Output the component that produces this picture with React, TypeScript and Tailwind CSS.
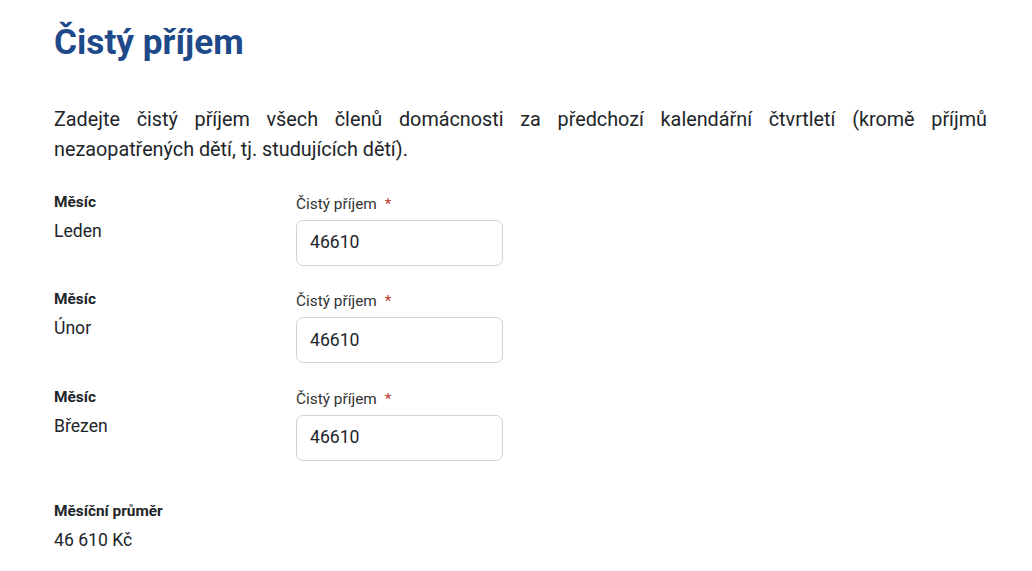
import React from "react";

const months = ["Leden", "Únor", "Březen"];

export default function App() {
  return (
    <div
      className="min-h-[571px] bg-white text-[#212529]"
      style={{ fontFamily: "Roboto, 'Noto Sans', sans-serif" }}
    >
      <div className="w-[933px] ml-[54px] pt-[21px]">
        <h1 className="text-[35.2px] leading-[42px] font-bold text-[#1f4a8a]">Čistý příjem</h1>
        <p className="mt-[41.7px] text-[19.8px] leading-[30px] text-justify text-[#212529]">
          Zadejte čistý příjem všech členů domácnosti za předchozí kalendářní čtvrtletí (kromě příjmů
          nezaopatřených dětí, tj. studujících dětí).
        </p>
        <div className="mt-[26px] flex flex-col gap-[22.5px]">
          {months.map((m) => (
            <div key={m} className="grid grid-cols-[242px_207px]">
              <div>
                <div className="text-[15.4px] leading-[22px] font-bold">Měsíc</div>
                <div className="mt-[5px] text-[17.6px] leading-[26px]">{m}</div>
              </div>
              <div className="pt-[2px]">
                <div className="text-[15.4px] leading-[22px] text-[#333]">
                  Čistý příjem <span className="ml-[4px] text-[#c0392b]">*</span>
                </div>
                <div className="mt-[5px] h-[46px] w-[207px] rounded-[7px] border border-[#ced4da] flex items-center px-[13px] text-[17.6px]">
                  46610
                </div>
              </div>
            </div>
          ))}
        </div>
        <div className="mt-[39px]">
          <div className="text-[15.4px] leading-[22px] font-bold">Měsíční průměr</div>
          <div className="mt-[5px] text-[17.6px] leading-[26px]">46 610 Kč</div>
        </div>
      </div>
    </div>
  );
}
